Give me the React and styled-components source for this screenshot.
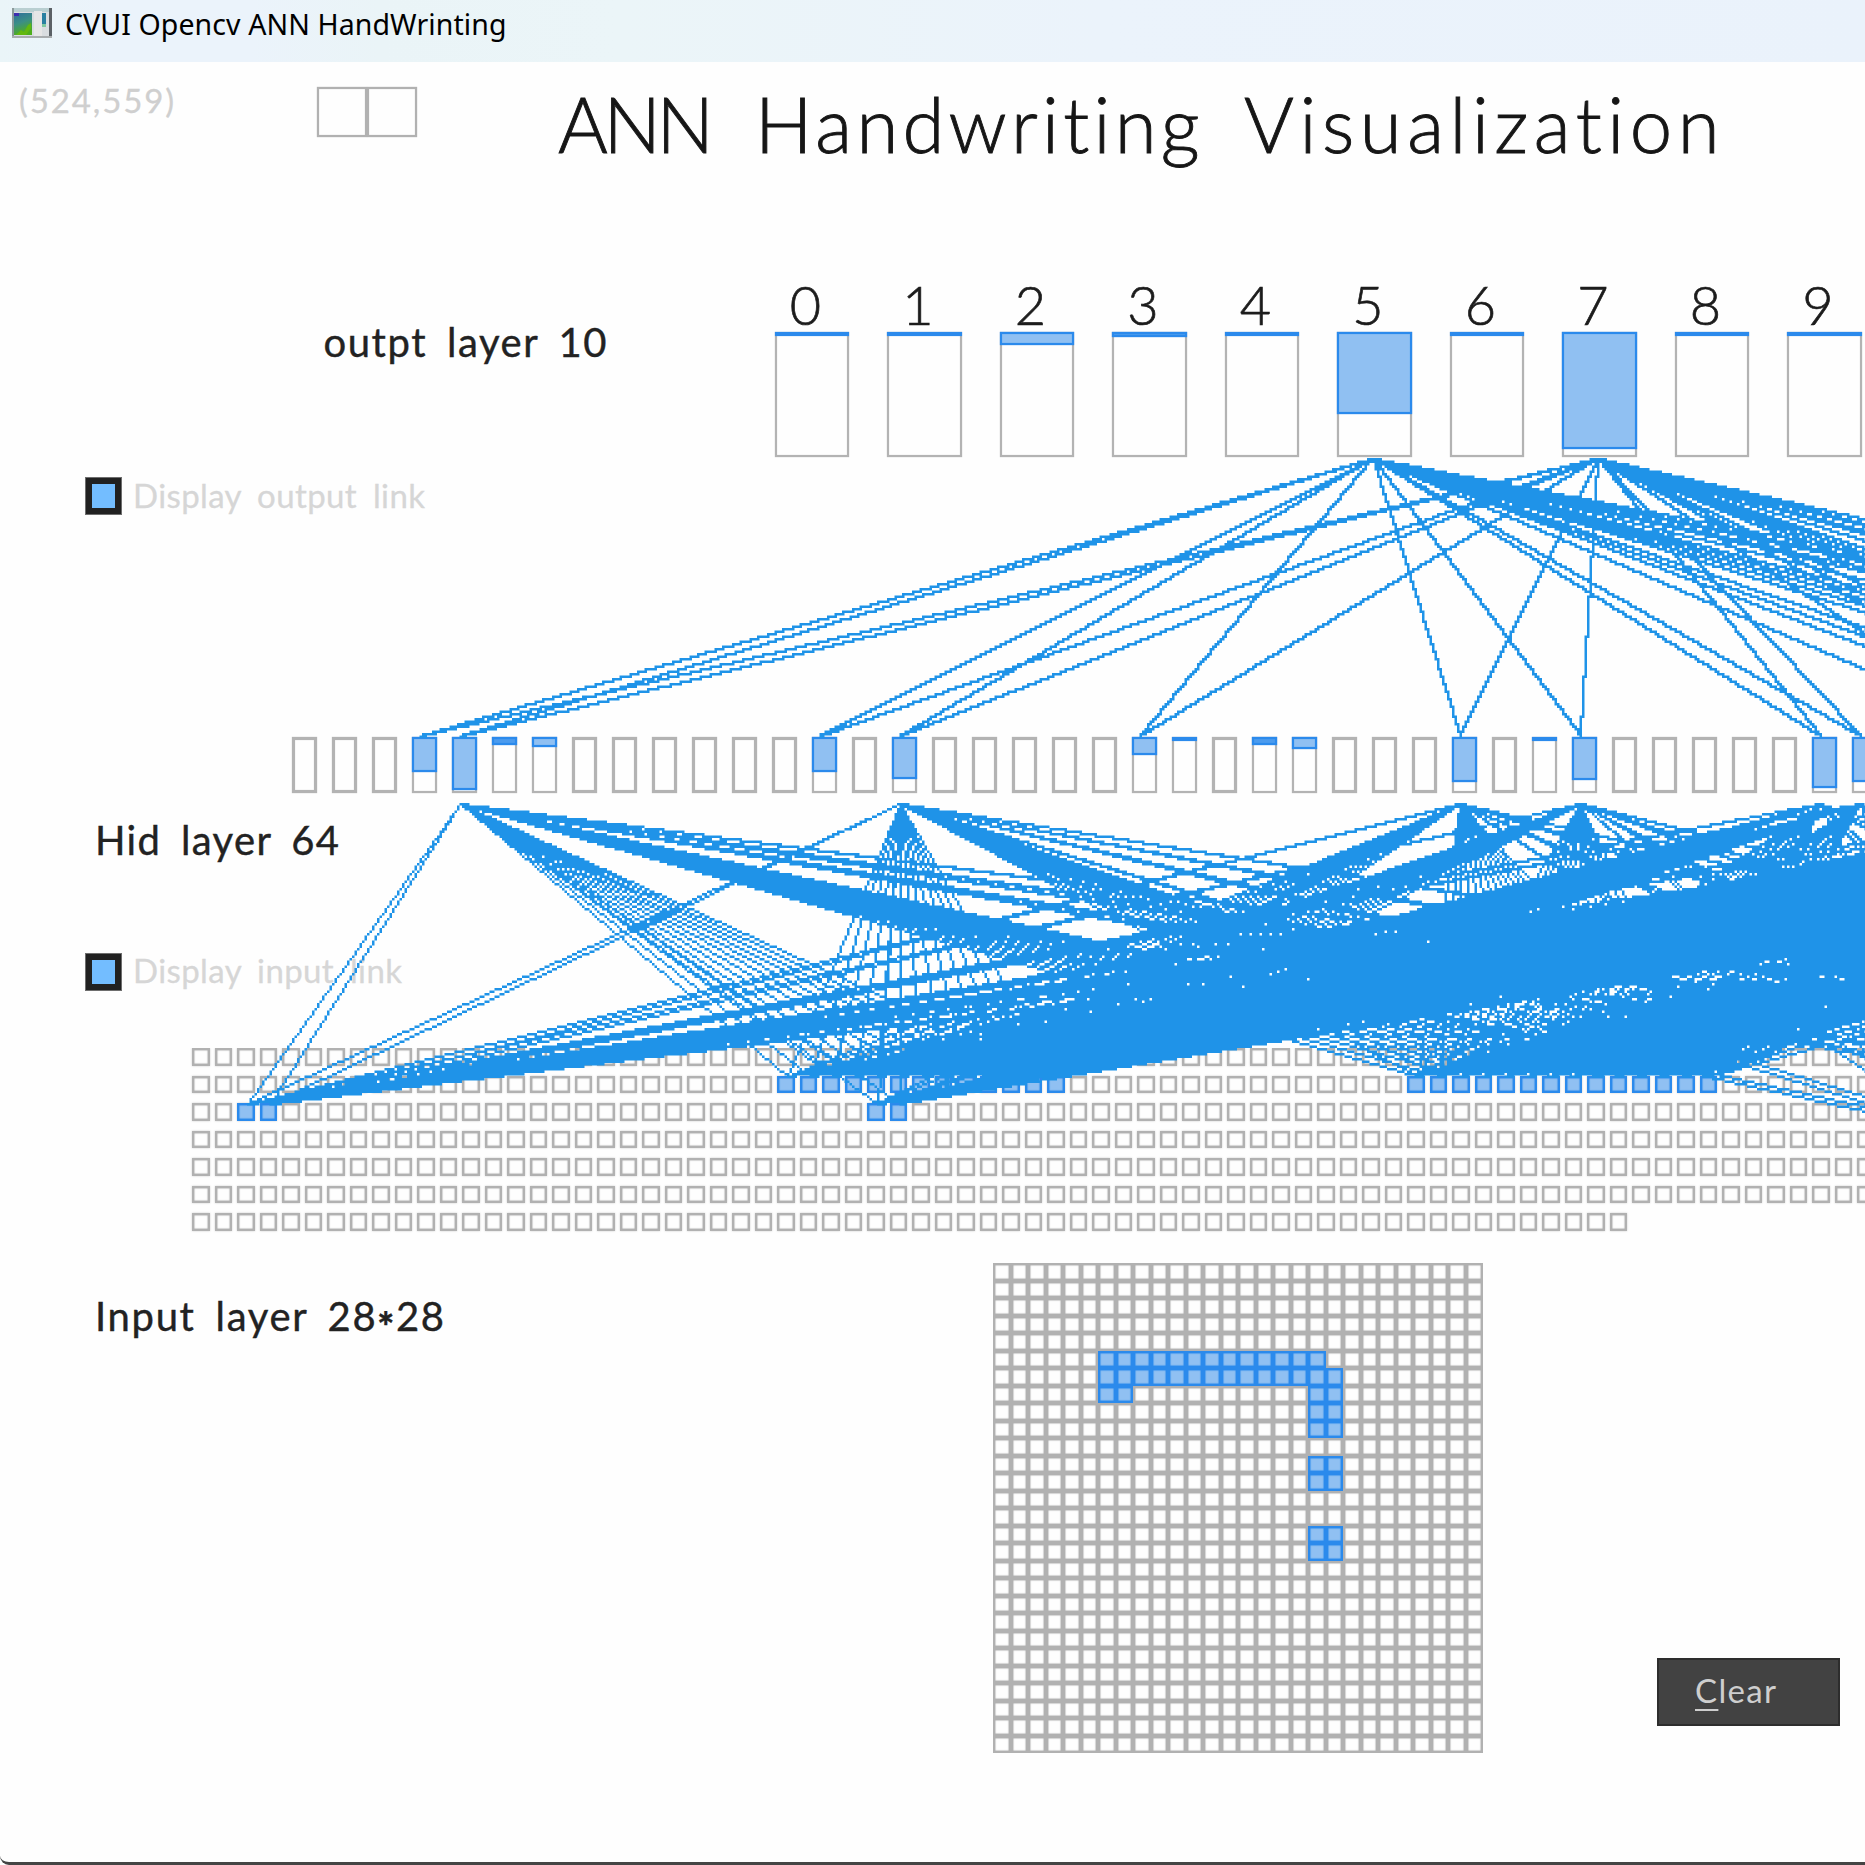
import React, { useLayoutEffect, useMemo, useRef, useState } from "react";
import styled, { createGlobalStyle } from "styled-components";

const LINE = "#1f93e8";
const EDGE = "#2b8aec";
const FILL = "#90c0f2";
const GREY = "#b1b1b1";

const GlobalStyle = createGlobalStyle`
  html, body { margin: 0; padding: 0; background: #fff; overflow: hidden; }
  * { box-sizing: border-box; }
`;

const Window = styled.div`
  position: relative;
  display: flex;
  flex-direction: column;
  width: 1865px;
  height: 1865px;
  overflow: hidden;
  background: #fefefe;
  border-bottom: 3px solid #444;
  border-bottom-left-radius: 9px;
  font-family: Lato, "Open Sans", sans-serif;
`;

const TitleBar = styled.header`
  display: flex;
  flex: none;
  height: 62px;
  padding: 8px 0 0 12px;
  gap: 13px;
  background: linear-gradient(90deg, #eaf5f8 0, #ebf3fb 110px, #ebf3fb 250px, #eaf4f7 380px, #ebf5f8 620px, #ebf3fb 1100px, #eaf2fb 100%);
`;

const AppIcon = styled.svg`
  flex: none;
  width: 40px;
  height: 30px;
`;

const TextBox = styled.div`
  flex: none;
  width: ${(p) => p.$w}px;
  height: ${(p) => p.$size}px;
  margin-top: ${(p) => p.$top || 0}px;
  margin-left: ${(p) => p.$left || 0}px;
  font-family: ${(p) => p.$family || "inherit"};
  font-size: ${(p) => p.$size}px;
  font-weight: ${(p) => p.$weight || 400};
  line-height: ${(p) => p.$size}px;
  word-spacing: ${(p) => p.$gap || 0}px;
  color: ${(p) => p.$color || "#222"};
  -webkit-text-stroke: ${(p) => p.$stroke || 0}px currentColor;
  white-space: nowrap;
`;

const Star = styled.span`
  font-weight: 900;
  vertical-align: -0.27em;
  line-height: 0;
`;

/* Spreads the letters so that the text spans exactly the width it is given. */
function Label({ children, ...box }) {
  const ref = useRef(null);
  const [spacing, setSpacing] = useState(0);
  useLayoutEffect(() => {
    const el = ref.current;
    el.style.letterSpacing = "0px";
    const natural = el.getBoundingClientRect().width;
    const count = el.textContent.length;
    const next = (box.$w - natural) / (count - 1);
    el.style.letterSpacing = next + "px";
    setSpacing(next);
  }, []);
  return (
    <TextBox {...box}>
      <span ref={ref} style={{ letterSpacing: spacing }}>{children}</span>
    </TextBox>
  );
}

const Row = styled.div`
  display: flex;
  flex: none;
  align-items: flex-start;
  height: ${(p) => p.$h}px;
  margin-top: ${(p) => p.$top || 0}px;
`;

const Heading = styled.div`
  display: flex;
  flex: none;
  margin: 24px 0 0 140px;
`;

const SwatchPair = styled.div`
  display: flex;
  flex: none;
  margin: 25px 0 0 143px;
`;

const Swatch = styled.div`
  width: 50px;
  height: 50px;
  border: 2px solid ${GREY};
  box-shadow: 0 0 1px ${GREY}, inset 0 0 1px ${GREY};
`;

const OutputColumns = styled.div`
  display: flex;
  flex: none;
  gap: 38px;
  margin-left: 168.6px;
`;

const OutputColumn = styled.div`
  display: flex;
  flex-direction: column;
  width: 74.5px;
`;

const Digit = styled.div`
  width: 61px;
  height: 56px;
  font-size: 54px;
  line-height: 57px;
  font-weight: 300;
  text-align: center;
  color: #1c1c1c;
  -webkit-text-stroke: 0.7px currentColor;
`;

const Neuron = styled.div`
  flex: none;
  width: ${(p) => p.$w}px;
  height: ${(p) => p.$h}px;
  border: ${(p) => (p.$bold ? 3 : 2)}px solid #b3b3b3;
  box-shadow: 0 0 1px #bbb, inset 0 0 1px #bbb;
`;

const Level = styled.div`
  position: relative;
  width: ${(p) => p.$w}px;
  height: ${(p) => p.$level}px;
  margin: -2px 0 0 -2px;
  border: 2px solid ${EDGE};
  background: ${(p) => (p.$level < 10 ? "#4b9bee" : FILL)};
  box-shadow: 0 0 1px ${EDGE}, inset 0 0 1px ${EDGE};
`;

const Check = styled.div`
  flex: none;
  width: 37px;
  height: 38px;
  margin-left: 85px;
  padding: 6px;
  border: 1px solid #6e6e6e;
  background: #212121;
`;

const CheckFill = styled.div`
  width: 100%;
  height: 100%;
  background: #73bdff;
`;

const HiddenRow = styled.div`
  display: flex;
  flex: none;
  gap: 15px;
  width: 1865px;
  height: 58px;
  margin-top: 221px;
  padding: 1px 0 0 292px;
  overflow: hidden;
`;

const InputStrip = styled.div`
  display: flex;
  flex: none;
  flex-direction: column;
  gap: 10px;
  width: 1865px;
  height: 185px;
  margin-top: 57px;
  padding-left: 192px;
  overflow: hidden;
`;

const StripRow = styled.div`
  display: flex;
  flex: none;
  gap: 5px;
`;

const Cell = styled.div`
  flex: none;
  width: 17.5px;
  height: 17.5px;
  border: 2px solid ${(p) => (p.$on ? EDGE : GREY)};
  background: ${(p) => (p.$on ? FILL : "#fefefe")};
  box-shadow:
    inset 0 0 1px 0.5px ${(p) => (p.$on ? EDGE : GREY)}
    ${(p) => (p.$halo ? ", 0 0 2px rgba(0, 0, 0, 0.2)" : "")};
`;

const Pad = styled.div`
  display: grid;
  flex: none;
  grid-template-columns: repeat(28, 17.5px);
  grid-auto-rows: 17.5px;
  margin-left: 549px;
`;

const ClearButton = styled.button`
  display: flex;
  flex: none;
  width: 183px;
  height: 68px;
  margin: 395px 0 0 174px;
  padding: 14px 0 0 36px;
  border: 2px solid #2d2d2d;
  background: #424242;
  font-family: inherit;
  text-align: left;
`;

const Hotkey = styled.span`
  text-decoration: underline;
  text-decoration-thickness: 2px;
  text-underline-offset: 6px;
`;

const Links = styled.svg`
  position: absolute;
  left: 0;
  top: 0;
  width: 1865px;
  height: 1865px;
  pointer-events: none;
`;

const OUTPUT_LEVELS = [4, 4, 13, 5, 4, 82, 4, 117, 4, 4];
const HIDDEN_LEVELS = {
  3: 35, 4: 53, 5: 8, 6: 10, 13: 35, 15: 42, 21: 18, 22: 3, 24: 8, 25: 12,
  29: 45, 31: 3, 32: 43, 38: 51, 39: 45, 43: 35, 45: 50,
};
const OUTPUT_ACTIVE = [5, 7];
const OUTPUT_SOURCES = [
  3, 4, 13, 15, 21, 29, 32, 38, 39, 43, 45, 46, 47, 49, 50, 51, 52, 53, 55, 57, 58, 60, 61, 63,
];
const INPUT_TARGETS = [4, 15, 29, 32, 38, 39, 45, 46, 49, 50, 51, 52, 55, 60];

const STROKES = [
  [5, 6, 18], [6, 6, 19], [7, 6, 7], [7, 18, 19], [8, 18, 19], [9, 18, 19],
  [11, 18, 19], [12, 18, 19], [15, 18, 19], [16, 18, 19],
];
const LIT = new Set();
STROKES.forEach(([r, a, b]) => {
  for (let c = a; c <= b; c++) LIT.add(r * 28 + c);
});

const COLS = 120;
const GRID_W = 747;
const GRID_H = 440;

/* Rasterises every link on the coarse drawing grid and returns it as pixel runs.
   Output links are 4-connected, input links 8-connected. */
function buildLinks() {
  const bits = new Uint8Array(GRID_W * GRID_H);
  const set = (x, y) => {
    if (x >= 0 && x < GRID_W && y >= 0 && y < GRID_H) bits[y * GRID_W + x] = 1;
  };
  const plot = (x0, y0, x1, y1, solid) => {
    const dx = Math.abs(x1 - x0);
    const dy = Math.abs(y1 - y0);
    const sx = x0 < x1 ? 1 : -1;
    const sy = y0 < y1 ? 1 : -1;
    let err = dx - dy;
    let x = x0;
    let y = y0;
    for (;;) {
      set(x, y);
      if (x === x1 && y === y1) break;
      const e2 = 2 * err;
      if (e2 > -dy) {
        err -= dy;
        x += sx;
        if (solid) set(x, y);
      }
      if (e2 < dx) { err += dx; y += sy; }
    }
  };
  OUTPUT_ACTIVE.forEach((o) =>
    OUTPUT_SOURCES.forEach((h) => plot(310 + 45 * o + 14, 159, 120 + 16 * h, 270, true))
  );
  LIT.forEach((i) => {
    const x = 77 + 9 * (i % COLS) + 4;
    const y = 395 + 11 * Math.floor(i / COLS);
    INPUT_TARGETS.forEach((h) => plot(120 + 16 * h, 297, x, y, false));
  });
  const out = [];
  for (let y = 0; y < GRID_H; y++) {
    let x = 0;
    while (x < GRID_W) {
      if (!bits[y * GRID_W + x]) { x++; continue; }
      const s = x;
      while (x < GRID_W && bits[y * GRID_W + x]) x++;
      out.push(`M${s} ${y}h${x - s}v1h${s - x}z`);
    }
  }
  return out.join("");
}

function Bar({ w, h, level }) {
  return (
    <Neuron $w={w} $h={h} $bold={!level}>
      {level ? <Level $w={w} $level={level} /> : null}
    </Neuron>
  );
}

export default function App() {
  const links = useMemo(buildLinks, []);
  const rows = [];
  for (let r = 0; r < 7; r++) {
    const n = Math.min(COLS, 784 - r * COLS);
    rows.push(Array.from({ length: n }, (_, c) => r * COLS + c));
  }
  return (
    <Window>
      <GlobalStyle />
      <TitleBar>
        <AppIcon viewBox="0 0 40 30">
          <defs>
            <linearGradient id="screen" x1="0" y1="0" x2="0.3" y2="1">
              <stop offset="0" stopColor="#2f6f9c" />
              <stop offset="0.5" stopColor="#3b8f86" />
              <stop offset="1" stopColor="#4fae1c" />
            </linearGradient>
          </defs>
          <rect width="40" height="30" fill="#d9dde0" />
          <rect width="40" height="4" fill="#b9cfd1" />
          <rect width="2" height="30" fill="#8c9a9a" />
          <rect x="2" y="5" width="18" height="22" fill="url(#screen)" />
          <rect x="2" y="5" width="5" height="3" fill="#3d2fb0" />
          <path d="M4 27l5-5 3 2 4-7 3-2v5l-5 7z" fill="#62b80f" />
          <rect x="22" y="3" width="8" height="26" fill="#e6e6e6" />
          <rect x="30" y="5" width="4" height="12" fill="#2a7fa0" />
          <rect x="30" y="16" width="4" height="3" fill="#7fc8a0" />
          <rect x="37" width="3" height="30" fill="#5b6166" />
          <rect y="28" width="40" height="2" fill="#a9adaf" />
        </AppIcon>
        <Label $w={441.5} $size={28.5} $top={2} $color="#000" $family='"Noto Sans", "Open Sans", sans-serif'>
          CVUI Opencv ANN HandWrinting
        </Label>
      </TitleBar>

      <Row $h={214}>
        <Label $w={155} $size={33} $top={22} $left={19} $color="#cfcfcf" $stroke={0.3}>(524,559)</Label>
        <SwatchPair>
          <Swatch />
          <Swatch />
        </SwatchPair>
        <Heading>
          <Label $w={156} $size={76} $left={1} $weight={300} $color="#161616" $stroke={0.9}>ANN</Label>
          <Label $w={446} $size={76} $left={41} $weight={300} $color="#161616" $stroke={0.9}>Handwriting</Label>
          <Label $w={477} $size={76} $left={43} $weight={300} $color="#161616" $stroke={0.9}>Visualization</Label>
        </Heading>
      </Row>

      <Row $h={181}>
        <Label $w={283} $size={40} $top={46} $left={323.4} $gap={8} $stroke={0.4}>outpt layer 10</Label>
        <OutputColumns>
          {OUTPUT_LEVELS.map((level, i) => (
            <OutputColumn key={i}>
              <Digit>{i}</Digit>
              <Bar w={74.5} h={125} level={level} />
            </OutputColumn>
          ))}
        </OutputColumns>
      </Row>

      <Row $h={38} $top={20}>
        <Check><CheckFill /></Check>
        <Label $w={292} $size={33} $top={2} $left={11} $gap={7} $color="#d6d6d6" $stroke={0.3}>Display output link</Label>
      </Row>

      <HiddenRow>
        {Array.from({ length: 64 }, (_, i) => (
          <Bar key={i} w={25} h={56} level={HIDDEN_LEVELS[i]} />
        ))}
      </HiddenRow>

      <Row $h={40} $top={25}>
        <Label $w={244} $size={40} $top={1} $left={95} $gap={8} $stroke={0.4}>Hid layer 64</Label>
      </Row>

      <Row $h={38} $top={94}>
        <Check><CheckFill /></Check>
        <Label $w={269} $size={33} $top={1} $left={11} $gap={7} $color="#d6d6d6" $stroke={0.3}>Display input link</Label>
      </Row>

      <InputStrip>
        {rows.map((row, r) => (
          <StripRow key={r}>
            {row.map((i) => <Cell key={i} $halo $on={LIT.has(i)} />)}
          </StripRow>
        ))}
      </InputStrip>

      <Row $h={490} $top={30}>
        <Label $w={349} $size={40} $top={33} $left={95} $gap={8} $stroke={0.4}>
          Input layer 28<Star>*</Star>28
        </Label>
        <Pad>
          {Array.from({ length: 784 }, (_, i) => <Cell key={i} $on={LIT.has(i)} />)}
        </Pad>
        <ClearButton>
          <Label $w={81} $size={33} $color="#cecece"><Hotkey>C</Hotkey>lear</Label>
        </ClearButton>
      </Row>

      <Links viewBox="0 0 1865 1865">
        <path d={links} fill={LINE} transform="translate(-0.5 60.5) scale(2.5)" />
      </Links>
    </Window>
  );
}
